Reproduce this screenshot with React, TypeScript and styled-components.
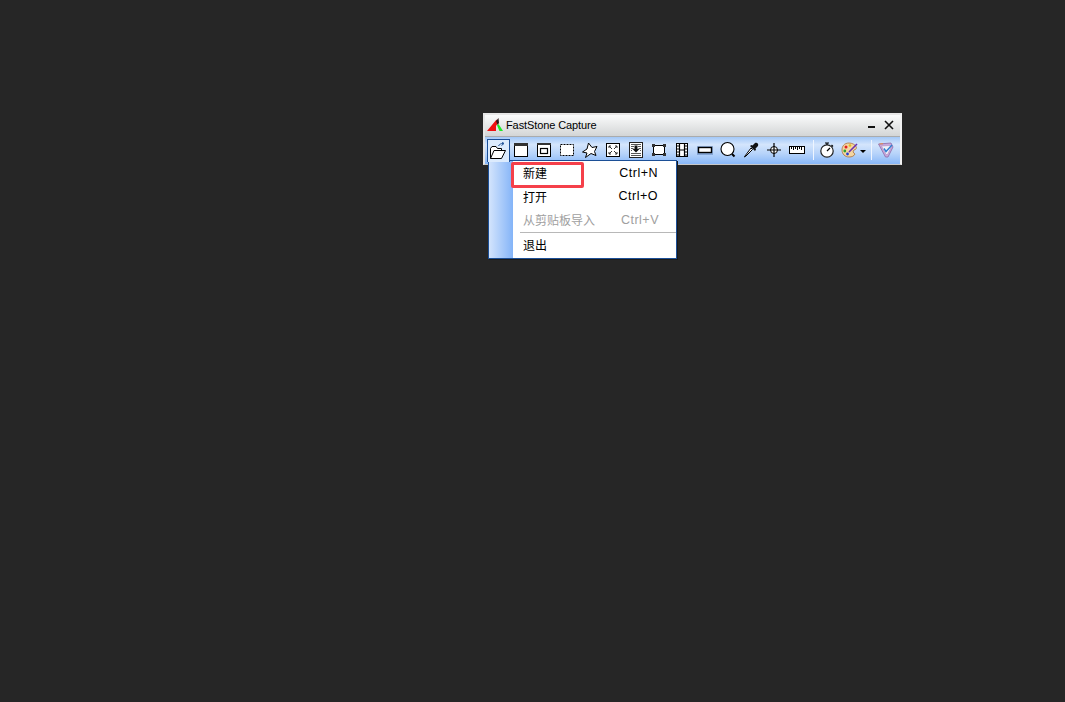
import React from "react";
import styled, { createGlobalStyle } from "styled-components";

const GlobalStyle = createGlobalStyle`
  html, body {
    margin: 0;
    height: 100%;
    background: #262626;
    overflow: hidden;
  }
  #root {
    height: 100%;
  }
`;

const Desktop = styled.div`
  position: relative;
  width: 1065px;
  height: 702px;
  background: #262626;
`;

const CaptureWindow = styled.div`
  position: absolute;
  left: 483px;
  top: 113px;
  width: 419px;
  height: 52px;
  box-sizing: border-box;
  border: 2px solid #e6e6e6;
  border-bottom: 1px solid #c8c8c8;
  border-right-color: #f2f2f2;
  background: #f0f0f0;
  display: flex;
  flex-direction: column;
`;

const TitleBar = styled.div`
  height: 22px;
  box-sizing: border-box;
  display: flex;
  align-items: center;
  padding: 0 6px 2px 2px;
  background: linear-gradient(#fafbfb, #d3d5d6);
  border-bottom: 1px solid #a9abad;
  flex: none;
`;

const TitleText = styled.span`
  margin-left: 3px;
  font: 11px "Liberation Sans", Arial, sans-serif;
  color: #000;
  letter-spacing: -0.1px;
`;

const WindowControls = styled.div`
  margin-left: auto;
  display: flex;
  gap: 8px;
  align-items: center;
`;

const Toolbar = styled.div`
  flex: 1;
  display: flex;
  align-items: flex-start;
  padding: 2px 0 0 1px;
  background: linear-gradient(#a3c8f8 0%, #d4e5fc 28%, #b6d3fa 62%, #88b7f8 100%);
`;

const ToolButton = styled.div<{ $active?: boolean; $wide?: boolean }>`
  flex: none;
  width: ${({ $wide }) => ($wide ? "29px" : "23px")};
  height: 22px;
  box-sizing: border-box;
  display: flex;
  align-items: center;
  justify-content: center;
  gap: ${({ $wide }) => ($wide ? "1px" : "0")};
  ${({ $wide }) => $wide && "padding-left: 1px;"}
  ${({ $active }) =>
    $active &&
    `
    border: 1px solid #1c4f96;
    border-bottom: 0;
    background: #dcebfd;
    height: 23px;
    margin: 0 -1px 0 1px;
    padding: 0 1px 1px 0;
    position: relative;
    z-index: 2;
  `}
`;

const Separator = styled.div<{ $left: number; $right: number }>`
  flex: none;
  width: 1px;
  height: 20px;
  background: #eef5ff;
  margin: 1px ${({ $right }) => $right}px 0 ${({ $left }) => $left}px;
`;

const DropArrow = styled.span`
  width: 0;
  height: 0;
  border-left: 3px solid transparent;
  border-right: 3px solid transparent;
  border-top: 3px solid #000;
  margin-top: 3px;
`;

const Menu = styled.div`
  position: absolute;
  left: 488px;
  top: 160px;
  width: 189px;
  height: 99px;
  box-sizing: border-box;
  border: 1px solid #1c4f96;
  background: #fff;
  display: flex;
  z-index: 1;
  box-shadow: 1px 1px 0 #1a1a1a;
`;

const MenuStrip = styled.div`
  width: 24px;
  flex: none;
  background: linear-gradient(90deg, #d3e4fc, #84b4f8);
`;

const MenuList = styled.div`
  flex: 1;
  display: flex;
  flex-direction: column;
`;

const MenuRow = styled.div<{ $disabled?: boolean }>`
  height: 23.5px;
  display: flex;
  align-items: center;
  justify-content: space-between;
  padding: 0 ${({ $disabled }) => ($disabled ? "17px" : "18px")} 0 10px;
  font: 12px "Noto Sans CJK SC", "Liberation Sans", sans-serif;
  color: ${({ $disabled }) => ($disabled ? "#a0a0a0" : "#000")};
`;

const Shortcut = styled.span`
  font: 12.5px "Liberation Sans", Arial, sans-serif;
  letter-spacing: 0.5px;
`;

const MenuDivider = styled.div`
  height: 1px;
  background: #b8b8b8;
  margin: 0 0 0 7px;
`;

const Highlight = styled.div`
  position: absolute;
  left: 511px;
  top: 162px;
  width: 73px;
  height: 26px;
  box-sizing: border-box;
  border: 3px solid #f5404a;
  border-radius: 2px;
  z-index: 3;
`;

const Glyph = ({ children, w = 18 }: { children: React.ReactNode; w?: number }) => (
  <svg width={w} height={18} viewBox={`0 0 ${w} 18`} fill="none" stroke="#000" strokeWidth={1}>
    {children}
  </svg>
);

const Logo = () => (
  <svg width={16} height={14} viewBox="0 0 16 14">
    <path d="M0 13 L9.5 1.5 L11 5 L9 8 L9 13 Z" fill="#f01010" />
    <path d="M9 3 L11.5 0 L12 5 L10.5 7 Z" fill="#301818" />
    <path d="M10 7.5 L11.5 6 L16 13 L12.5 13 Z" fill="#20e828" />
  </svg>
);

const Minimize = () => (
  <svg width={10} height={10} viewBox="0 0 10 10">
    <rect x="2" y="6" width="7" height="2" fill="#111" />
  </svg>
);

const Close = () => (
  <svg width={10} height={10} viewBox="0 0 10 10">
    <path d="M1 1 L9 9 M9 1 L1 9" stroke="#111" strokeWidth={1.6} />
  </svg>
);

const tools: React.ReactNode[] = [
  <Glyph key="open">
    <path d="M1.5 16.5 V6.5 L3 4.5 H7 L8.5 6.5 H12.5 V8.5" fill="#fff" />
    <path d="M1.5 16.5 L5 8.5 H16.5 L12.5 16.5 Z" fill="#fff" />
    <path d="M9.5 4 C10.5 2 12 1.5 14.5 1.5 M12.5 -0.5 L15 1.5 L12.5 3.5" stroke="#1c4f96" />
  </Glyph>,
  <Glyph key="window">
    <rect x="2.5" y="2.5" width="13" height="13" fill="#fff" />
    <rect x="2" y="2" width="14" height="3" fill="#333" stroke="none" />
  </Glyph>,
  <Glyph key="object">
    <rect x="2.5" y="2.5" width="13" height="13" fill="#fff" />
    <rect x="2" y="2" width="14" height="2" fill="#333" stroke="none" />
    <rect x="5.5" y="7.5" width="7" height="5" strokeWidth={1.2} fill="#fff" />
  </Glyph>,
  <Glyph key="rect">
    <rect x="2.5" y="3.5" width="13" height="11" fill="#fff" strokeDasharray="2 1" />
  </Glyph>,
  <Glyph key="freehand">
    <path d="M1.5 11 L6 8 L7.5 2 L11 6.5 L16 5.5 L13.5 10.5 L15 14.5 L10 12.5 L4.5 16.5 L6 12 Z" fill="#fff" />
  </Glyph>,
  <Glyph key="full">
    <rect x="2.5" y="2.5" width="13" height="13" fill="#fff" />
    <path d="M5 5 L8 8 M13 5 L10 8 M5 13 L8 10 M13 13 L10 10 M5 5 H7 M5 5 V7 M13 5 H11 M13 5 V7 M5 13 H7 M5 13 V11 M13 13 H11 M13 13 V11" stroke="#333" />
  </Glyph>,
  <Glyph key="scroll">
    <rect x="2.5" y="1.5" width="13" height="15" fill="#fff" stroke="#222" />
    <path d="M4 3.5 H14 M4 5.5 H7 M11 5.5 H14 M4 7.5 H6.5 M11.5 7.5 H14 M4 9.5 H5 M13 9.5 H14 M4 12.5 H14 M4 14.5 H14" stroke="#555" />
    <path d="M7.5 4.5 H10.5 V8 H12.5 L9 11.5 L5.5 8 H7.5 Z" fill="#111" stroke="none" />
  </Glyph>,
  <Glyph key="fixed">
    <rect x="3.5" y="4.5" width="11" height="9" fill="#fff" strokeWidth={1} />
    <rect x="2" y="3" width="3" height="3" fill="#333" stroke="none" />
    <rect x="13" y="3" width="3" height="3" fill="#333" stroke="none" />
    <rect x="2" y="12" width="3" height="3" fill="#333" stroke="none" />
    <rect x="13" y="12" width="3" height="3" fill="#333" stroke="none" />
  </Glyph>,
  <Glyph key="video">
    <rect x="3.5" y="2.5" width="11" height="13" fill="#fff" />
    <path d="M6.5 2 V16 M11.5 2 V16 M6 9 H12" strokeWidth={1.2} />
    <path d="M3 5 H6 M3 8 H6 M3 11 H6 M3 14 H6 M12 5 H15 M12 8 H15 M12 11 H15 M12 14 H15" />
  </Glyph>,
  <Glyph key="bar">
    <rect x="1" y="5" width="16" height="9" fill="#5f84b8" stroke="none" opacity={0.55} />
    <rect x="2.5" y="6.5" width="13" height="5" fill="#fff" strokeWidth={1.4} />
  </Glyph>,
  <Glyph key="magnifier">
    <circle cx="8.5" cy="8" r="6.5" fill="#fff" strokeWidth={1.1} />
    <path d="M13 13 L15.5 15.5" strokeWidth={2} />
  </Glyph>,
  <Glyph key="picker">
    <path d="M3 15 L2.5 16 L3.5 15.5 L10.5 8.5 L9 7 Z" fill="#fff" />
    <path d="M8 5 L13 10 L14 8.5 L13.5 7.5 L16 5 C17 3 15 1 13 2 L10.5 4.5 L9.5 4 Z" fill="#111" stroke="none" />
  </Glyph>,
  <Glyph key="cross">
    <circle cx="9" cy="9" r="3.5" fill="#fff" />
    <path d="M9 2 V16 M2 9 H16" strokeWidth={1.2} />
  </Glyph>,
  <Glyph key="ruler">
    <rect x="1.5" y="5.5" width="15" height="7" fill="#fff" />
    <path d="M3.5 6 V8 M5.5 6 V9 M7.5 6 V8 M9.5 6 V9 M11.5 6 V8 M13.5 6 V9" />
  </Glyph>,
];

const Timer = () => (
  <Glyph>
    <circle cx="9" cy="10" r="6.2" fill="#fff" strokeWidth={1.2} stroke="#222" />
    <path d="M7 2 H11 M9 2 V4 M13.5 4 L15 5.5" strokeWidth={1.2} />
    <path d="M9 10 L12 7" strokeWidth={1.2} />
  </Glyph>
);

const Palette = () => (
  <svg width={18} height={18} viewBox="0 0 18 18">
    <path d="M8 2 C3 2 1 5.5 1 9 C1 13 4 16 8 16 C11 16 13 15 14 13 C12 12 11.5 10 13 9 C15 8.5 16 7.5 15 5.5 C14 3.5 11 2 8 2 Z" fill="#f5d6a0" stroke="#a8703a" strokeWidth={0.8} />
    <circle cx="5" cy="6" r="1.5" fill="#e02020" />
    <circle cx="9" cy="4.5" r="1.3" fill="#e0c020" />
    <circle cx="3.8" cy="10" r="1.4" fill="#30a030" />
    <circle cx="6.5" cy="13" r="1.4" fill="#2040d0" />
    <path d="M8 11 L16 3" stroke="#6a2fb0" strokeWidth={1.6} />
  </svg>
);

const Settings = () => (
  <svg width={18} height={18} viewBox="0 0 18 18">
    <path d="M1.5 3 L14 2 L16 6 L11 16 L8.5 16 Z" fill="#c9a8dc" stroke="#8a6aa6" strokeWidth={0.8} />
    <path d="M4.5 5 L13 4.5 L14 6.5 L10.5 13.5 L9 13.5 Z" fill="#eef2fb" stroke="#b08fc0" strokeWidth={0.6} />
    <path d="M7 7.5 L9 10.5 L15 4" fill="none" stroke="#2f7fd0" strokeWidth={1.4} />
    <path d="M2.5 3 L6 2.6" stroke="#e08a5a" strokeWidth={1.2} />
  </svg>
);

export default function App() {
  return (
    <Desktop>
      <GlobalStyle />
      <CaptureWindow>
        <TitleBar>
          <Logo />
          <TitleText>FastStone Capture</TitleText>
          <WindowControls>
            <Minimize />
            <Close />
          </WindowControls>
        </TitleBar>
        <Toolbar>
          {tools.map((icon, i) => (
            <ToolButton key={i} $active={i === 0}>
              {icon}
            </ToolButton>
          ))}
          <Separator $left={5} $right={1} />
          <ToolButton>
            <Timer />
          </ToolButton>
          <ToolButton $wide>
            <Palette />
            <DropArrow />
          </ToolButton>
          <Separator $left={4} $right={2} />
          <ToolButton>
            <Settings />
          </ToolButton>
        </Toolbar>
      </CaptureWindow>
      <Menu>
        <MenuStrip />
        <MenuList>
          <MenuRow>
            <span>新建</span>
            <Shortcut>Ctrl+N</Shortcut>
          </MenuRow>
          <MenuRow>
            <span>打开</span>
            <Shortcut>Ctrl+O</Shortcut>
          </MenuRow>
          <MenuRow $disabled>
            <span>从剪贴板导入</span>
            <Shortcut>Ctrl+V</Shortcut>
          </MenuRow>
          <MenuDivider />
          <MenuRow>
            <span>退出</span>
          </MenuRow>
        </MenuList>
      </Menu>
      <Highlight />
    </Desktop>
  );
}
